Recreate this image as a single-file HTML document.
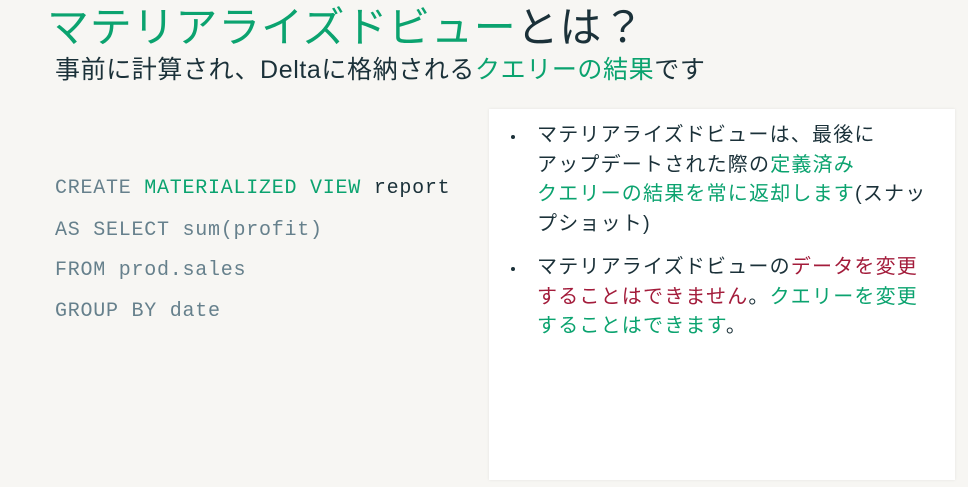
<!DOCTYPE html>
<html><head><meta charset="utf-8"><style>
body{margin:0;width:968px;height:487px;background:#f7f6f3;position:relative;overflow:hidden;font-family:"Liberation Sans","Noto Sans CJK JP",sans-serif;color:#1b3139}
.g{color:#0ba36f}.r{color:#a31c3b}
#t{position:absolute;left:47px;top:-6px;font-size:42px;white-space:nowrap;letter-spacing:0.8px}
#s{position:absolute;left:55px;top:50px;font-size:25px;letter-spacing:0.6px;white-space:nowrap}
.code{position:absolute;left:55px;font-family:"Liberation Mono",monospace;font-size:20px;letter-spacing:0.75px;color:#66808c;white-space:pre}
.code .k{color:#0ba36f}.code .d{color:#1b3139}
#p{position:absolute;left:489px;top:109px;width:466px;height:371px;background:#fff;box-shadow:0 0 3px rgba(0,0,0,.08)}
ul{margin:0;padding:0;list-style:none;position:absolute;left:48px;top:12px;width:420px;font-size:20px;letter-spacing:1.2px;line-height:29.5px;white-space:nowrap}
li{position:relative;margin-bottom:14px}
li:before{content:"";position:absolute;left:-26px;top:14px;width:4px;height:4px;border-radius:50%;background:#1b3139}
</style></head><body>
<div id="t"><span class="g">マテリアライズドビュー</span>とは？</div>
<div id="s">事前に計算され、Deltaに格納される<span class="g">クエリーの結果</span>です</div>
<div class="code" style="top:177px">CREATE <span class="k">MATERIALIZED VIEW</span> <span class="d">report</span></div>
<div class="code" style="top:219px">AS SELECT sum(profit)</div>
<div class="code" style="top:259px">FROM prod.sales</div>
<div class="code" style="top:300px">GROUP BY date</div>
<div id="p"><ul>
<li>マテリアライズドビューは、最後に<br>アップデートされた際の<span class="g">定義済み</span><br><span class="g">クエリーの結果を常に返却します</span>(スナッ<br>プショット)</li>
<li>マテリアライズドビューの<span class="r">データを変更</span><br><span class="r">することはできません</span>。<span class="g">クエリーを変更</span><br><span class="g">することはできます</span>。</li>
</ul></div>
</body></html>
